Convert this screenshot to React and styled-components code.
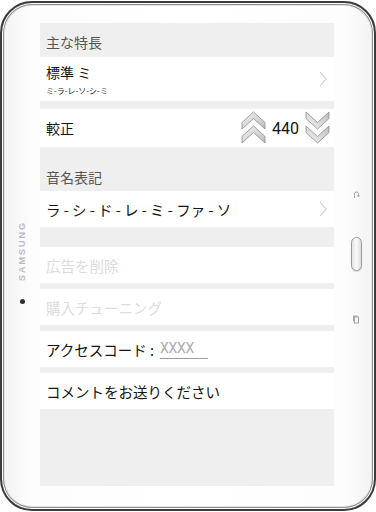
import React from "react";
import styled, { createGlobalStyle } from "styled-components";

const GlobalStyle = createGlobalStyle`
  html, body {
    margin: 0;
    padding: 0;
    background: #ffffff;
  }
  * {
    box-sizing: border-box;
  }
`;

const Tablet = styled.div`
  width: 376px;
  height: 510px;
  margin-top: 1px;
  border: 2px solid #3c3c3c;
  border-radius: 32px;
  background: linear-gradient(90deg, #f3f3f3 0%, #fdfdfd 8%, #ffffff 50%, #fdfdfd 92%, #f2f2f2 100%);
  box-shadow: inset 0 0 0 1px #ffffff, inset 0 0 0 2px #8c8c8c, inset 0 0 0 3px #e6e6e6;
  display: flex;
  padding-top: 20px;
  font-family: "Noto Sans CJK JP", "Noto Sans", sans-serif;
`;

const LeftBezel = styled.div`
  width: 38px;
  display: flex;
  flex-direction: column;
  align-items: center;
  padding-left: 2px;
  padding-top: 198px;
`;

const Brand = styled.span`
  writing-mode: vertical-rl;
  transform: rotate(180deg);
  font-family: "Liberation Sans", Arial, sans-serif;
  font-weight: bold;
  font-size: 9px;
  letter-spacing: 2px;
  color: #bcbcbc;
`;

const Sensor = styled.div`
  width: 5px;
  height: 5px;
  border-radius: 50%;
  background: #2e2e2e;
  margin-top: 18px;
`;

const RightBezel = styled.div`
  flex: 1;
  display: flex;
  flex-direction: column;
  align-items: flex-start;
  padding-left: 17px;
  padding-top: 168px;
`;

const HomeButton = styled.div`
  width: 11px;
  height: 34px;
  margin-top: 38px;
  border-radius: 6px;
  border: 1px solid #9a9a9a;
  background: linear-gradient(90deg, #e4e4e4, #fafafa 50%, #dcdcdc);
  box-shadow: 0 1px 1px rgba(0, 0, 0, 0.15);
`;

const SoftKey = styled.svg`
  display: block;
  margin-top: ${(p) => p.$top}px;
  margin-left: 2px;
`;

const Screen = styled.div`
  width: 294px;
  height: 463px;
  background: #efefef;
  display: flex;
  flex-direction: column;
`;

const SectionHeader = styled.div`
  height: ${(p) => p.$height}px;
  padding: 0 6px;
  display: flex;
  align-items: flex-end;
  padding-bottom: ${(p) => p.$bottom}px;
  font-size: 14px;
  color: #555555;
`;

const Row = styled.div`
  height: ${(p) => p.$height || 36}px;
  margin-top: ${(p) => p.$gap || 0}px;
  background: #ffffff;
  display: flex;
  align-items: center;
  justify-content: space-between;
  padding: 0 6px;
  font-size: 14.5px;
  color: ${(p) => (p.$disabled ? "#dcdcdc" : "#141414")};
`;

const TwoLine = styled.div`
  display: flex;
  flex-direction: column;
  gap: 6px;
`;

const MainText = styled.span`
  font-size: 14px;
  line-height: 16px;
`;

const SubText = styled.span`
  font-size: 8px;
  line-height: 9px;
  color: #222222;
`;

const Chevron = styled.svg`
  display: block;
  margin-right: 1px;
`;

const Stepper = styled.div`
  display: flex;
  align-items: center;
  gap: 6px;
  margin-right: -2px;
`;

const Value = styled.span`
  font-family: Roboto, "Liberation Sans", sans-serif;
  font-size: 16px;
  color: #141414;
`;

const CodeField = styled.div`
  display: flex;
  align-items: center;
`;

const CodeInput = styled.input`
  width: 48px;
  margin-left: 6px;
  border: none;
  border-bottom: 1px solid #9c9c9c;
  padding: 0 0 2px 0;
  outline: none;
  background: transparent;
  font-family: Roboto, "Liberation Sans", sans-serif;
  font-size: 14px;
  letter-spacing: -0.3px;
  color: #222222;
  &::placeholder {
    color: #ababab;
  }
`;

const ArrowIcon = ({ down }) => (
  <svg width="25" height="34" viewBox="0 0 25 34">
    <defs>
      <linearGradient id={down ? "gd" : "gu"} x1="0" y1="0" x2="1" y2="1">
        <stop offset="0" stopColor="#f4f4f4" />
        <stop offset="1" stopColor="#bdbdbd" />
      </linearGradient>
    </defs>
    <g transform={down ? "translate(0 33) scale(1 -1)" : undefined}>
      <polygon
        points="12.5,1 24,11.5 24,18 12.5,7.5 1,18 1,11.5"
        fill={`url(#${down ? "gd" : "gu"})`}
        stroke="#8a8a8a"
        strokeWidth="0.8"
      />
      <polygon
        points="12.5,15 24,25.5 24,32 12.5,21.5 1,32 1,25.5"
        fill={`url(#${down ? "gd" : "gu"})`}
        stroke="#8a8a8a"
        strokeWidth="0.8"
      />
    </g>
  </svg>
);

const Arrow = () => (
  <Chevron width="8" height="16" viewBox="0 0 8 16">
    <polyline points="1,1 7,8 1,15" fill="none" stroke="#c8c8c8" strokeWidth="1.1" />
  </Chevron>
);

export default function App() {
  return (
    <>
      <GlobalStyle />
      <Tablet>
        <LeftBezel>
          <Brand>SAMSUNG</Brand>
          <Sensor />
        </LeftBezel>
        <Screen>
          <SectionHeader $height={34} $bottom={5}>主な特長</SectionHeader>
          <Row $height={44}>
            <TwoLine>
              <MainText>標準 ミ</MainText>
              <SubText>ミ-ラ-レ-ソ-シ-ミ</SubText>
            </TwoLine>
            <Arrow />
          </Row>
          <Row $height={38} $gap={8}>
            <MainText>較正</MainText>
            <Stepper>
              <ArrowIcon />
              <Value>440</Value>
              <ArrowIcon down />
            </Stepper>
          </Row>
          <SectionHeader $height={44} $bottom={4}>音名表記</SectionHeader>
          <Row>
            <span>ラ - シ - ド - レ - ミ - ファ - ソ</span>
            <Arrow />
          </Row>
          <Row $gap={20} $disabled>広告を削除</Row>
          <Row $gap={6} $disabled>購入チューニング</Row>
          <Row $gap={6}>
            <CodeField>
              <span>アクセスコード :</span>
              <CodeInput placeholder="XXXX" />
            </CodeField>
          </Row>
          <Row $gap={6}>コメントをお送りください</Row>
        </Screen>
        <RightBezel>
          <SoftKey $top={0} width="7" height="8" viewBox="0 0 7 8">
            <path d="M1.5 7 V3 a2 2 0 0 1 4 0 V5.5 M4.3 4.5 L5.5 5.8 L6.6 4.5" fill="none" stroke="#9a9a9a" strokeWidth="0.9" />
          </SoftKey>
          <HomeButton />
          <SoftKey $top={44} width="7" height="9" viewBox="0 0 7 9">
            <rect x="1.5" y="2" width="4" height="6" fill="none" stroke="#9a9a9a" strokeWidth="0.9" />
            <path d="M0.5 6.5 V1 H4.5" fill="none" stroke="#9a9a9a" strokeWidth="0.9" />
          </SoftKey>
        </RightBezel>
      </Tablet>
    </>
  );
}
